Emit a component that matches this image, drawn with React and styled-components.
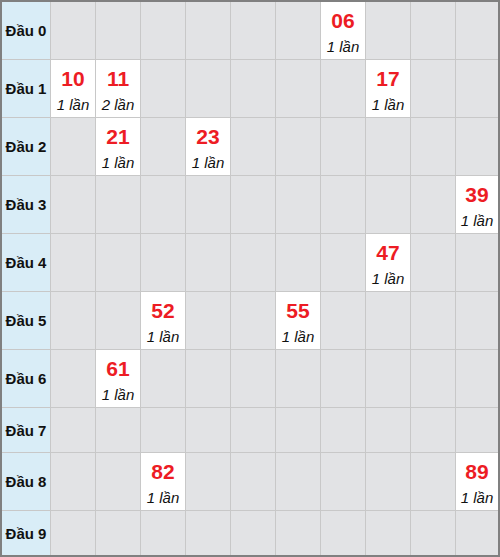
import React from "react";
import styled, { createGlobalStyle } from "styled-components";

const Global = createGlobalStyle`
  html, body { margin: 0; padding: 0; background: #ffffff; }
  body { font-family: "Liberation Sans", Arial, sans-serif; }
`;

const Board = styled.div`
  box-sizing: border-box;
  width: 500px;
  height: 557px;
  border: 2px solid #808080;
  background: #c8c8c8;
  display: grid;
  grid-template-columns: 48px repeat(9, 44px) 1fr;
  grid-template-rows: ${(p) => p.$rows};
  gap: 1px;
`;

const HeadCell = styled.div`
  background: #d9edf7;
  display: flex;
  align-items: center;
  justify-content: center;
  font-weight: bold;
  font-size: 15px;
  color: #111;
  white-space: nowrap;
`;

const Cell = styled.div`
  background: ${(p) => (p.$hit ? "#ffffff" : "#e2e3e5")};
  display: flex;
  flex-direction: column;
  align-items: center;
  justify-content: center;
  padding-top: 2px;
  box-sizing: border-box;
`;

const Num = styled.div`
  color: #ed1c24;
  font-weight: bold;
  font-size: 21px;
  line-height: 30px;
`;

const Count = styled.div`
  color: #111;
  font-style: italic;
  font-size: 15px;
  line-height: 22px;
  white-space: nowrap;
`;

const hits = {
  0: { 6: 1 },
  1: { 0: 1, 1: 2, 7: 1 },
  2: { 1: 1, 3: 1 },
  3: { 9: 1 },
  4: { 7: 1 },
  5: { 2: 1, 5: 1 },
  6: { 1: 1 },
  7: {},
  8: { 2: 1, 9: 1 },
  9: {},
};

export default function App() {
  const heads = Array.from({ length: 10 }, (_, i) => i);
  const rows = heads
    .map((h) => (Object.keys(hits[h]).length ? "57px" : "44px"))
    .join(" ");
  return (
    <>
      <Global />
      <Board $rows={rows}>
        {heads.map((h) => (
          <React.Fragment key={h}>
            <HeadCell>Đầu {h}</HeadCell>
            {heads.map((t) => {
              const c = hits[h][t];
              return (
                <Cell key={t} $hit={!!c}>
                  {c ? (
                    <>
                      <Num>{`${h}${t}`}</Num>
                      <Count>{c} lần</Count>
                    </>
                  ) : null}
                </Cell>
              );
            })}
          </React.Fragment>
        ))}
      </Board>
    </>
  );
}
